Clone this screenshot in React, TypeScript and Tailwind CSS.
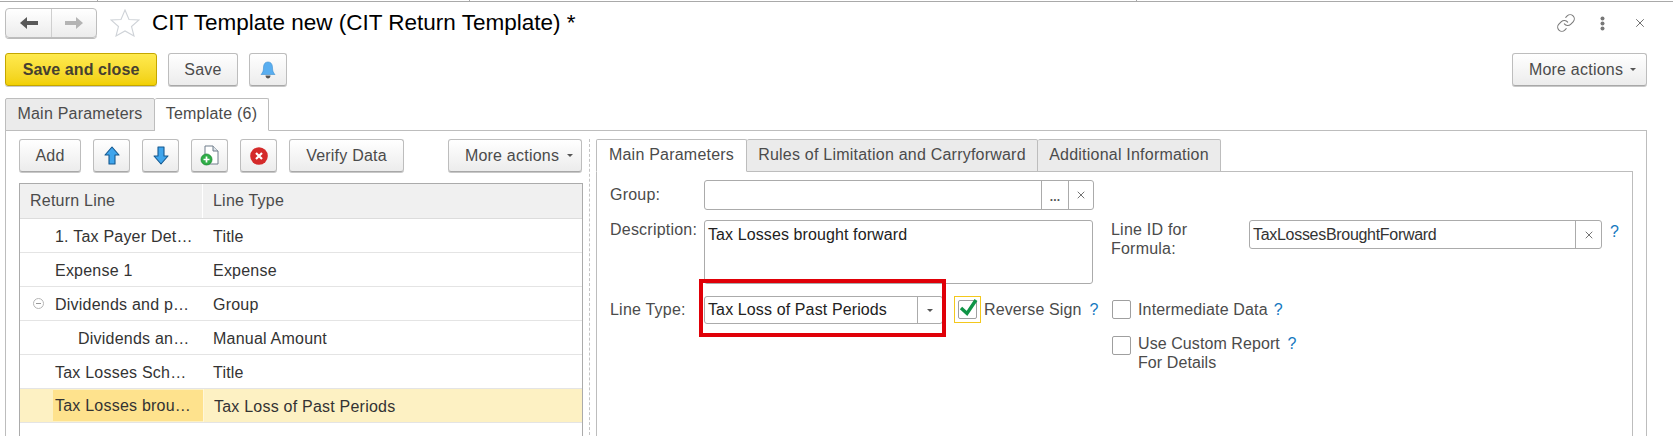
import React from "react";
import { Link, X } from "lucide-react";

const font = "font-['Liberation_Sans',Arial,sans-serif]";
const btn = "flex items-center justify-center h-[33px] rounded-[3px] border border-[#bdbdbd] border-b-[#a8a8a8] bg-gradient-to-b from-white to-[#ececec] shadow-[0_1px_0_#c8c8c8] text-[#4b4b4b] shrink-0";

function Caret() {
  return <span className="inline-block w-0 h-0 border-l-[3px] border-r-[3px] border-t-[3px] border-l-transparent border-r-transparent border-t-[#555]" />;
}

function ArrowV({ down }: { down?: boolean }) {
  return (
    <svg width="16" height="19" viewBox="0 0 16 19" style={{ transform: down ? "scaleY(-1)" : undefined }}>
      <path d="M8 1 L15 9 H11 V18 H5 V9 H1 Z" fill="#3fa5ec" stroke="#14588f" strokeWidth="1.1" strokeLinejoin="round" />
    </svg>
  );
}

function Q({ className = "" }: { className?: string }) {
  return <span className={`text-[#1478c0] text-[16px] font-normal ${className}`}>?</span>;
}

function Check({ className = "" }: { className?: string }) {
  return <span className={`block w-[19px] h-[19px] rounded-[2px] border border-[#9f9f9f] bg-white shrink-0 ${className}`} />;
}

const rows = [
  { pad: "pl-[35px]", name: "1. Tax Payer Det…", type: "Title" },
  { pad: "pl-[35px]", name: "Expense 1", type: "Expense" },
  { pad: "pl-[35px]", name: "Dividends and p…", type: "Group", tree: true },
  { pad: "pl-[58px]", name: "Dividends an…", type: "Manual Amount" },
  { pad: "pl-[35px]", name: "Tax Losses Sch…", type: "Title" },
  { pad: "pl-[35px]", name: "Tax Losses brou…", type: "Tax Loss of Past Periods", sel: true },
];

function TableBody() {
  return (
    <div>
      {rows.map((r) => (
        <div key={r.name} className={`flex h-[34px] border-b border-[#e4e4e4] text-[#333] ${r.sel ? "bg-[#fdf1c3]" : ""}`}>
          {r.sel ? (
            <div className="w-[183px] flex shrink-0">
              <div className="w-[33px]" />
              <div className="w-[150px] bg-[#fee28d] mt-px mb-px pl-[2px] pt-[1px] flex items-center whitespace-nowrap">{r.name}</div>
            </div>
          ) : (
            <div className={`relative w-[183px] shrink-0 flex items-center ${r.pad} pt-[2px] whitespace-nowrap`}>
              {r.tree && (
                <span className="absolute left-[13px] top-[11px] w-[11px] h-[11px] rounded-full border border-[#b5b5b5] flex items-center justify-center">
                  <span className="block w-[5px] h-px bg-[#999]" />
                </span>
              )}
              {r.name}
            </div>
          )}
          <div className={`flex items-center pl-[10px] pt-[2px] ${r.sel ? "border-l border-[#fff6d8]" : ""}`}>{r.type}</div>
        </div>
      ))}
    </div>
  );
}

export default function App() {
  return (
    <div className={`relative w-[1673px] h-[436px] overflow-hidden bg-white ${font} text-[16px] tracking-[0.22px] text-[#4b4b4b]`}>
      {/* top strip */}
      <div className="h-[2px] border-b border-[#a9a9a9] flex">
        <span className="ml-[97px] w-px h-px bg-[#a9a9a9]" />
        <span className="ml-[371px] w-px h-px bg-[#a9a9a9]" />
        <span className="ml-[666px] w-px h-px bg-[#a9a9a9]" />
      </div>

      {/* title row */}
      <div className="flex items-center h-[51px] pl-[5px] pb-[10px] pt-[1px]">
        <div className="flex h-[30px] w-[92px] rounded-[4px] border border-[#bdbdbd] bg-gradient-to-b from-white to-[#ececec] shadow-[0_1px_0_#bbb]">
          <div className="w-[46px] flex items-center justify-center border-r border-[#cfcfcf]">
            <svg width="18" height="12" viewBox="0 0 18 12"><path d="M0 6 L7 0 V4 H18 V8 H7 V12 Z" fill="#595959" /></svg>
          </div>
          <div className="flex-1 flex items-center justify-center">
            <svg width="18" height="12" viewBox="0 0 18 12"><path d="M18 6 L11 0 V4 H0 V8 H11 V12 Z" fill="#b4b4b4" /></svg>
          </div>
        </div>
        <svg className="ml-[13px]" width="30" height="28" viewBox="0 0 30 28">
          <path d="M15 1 L19 10.5 L29 11 L21.5 17.5 L24 27 L15 22 L6 27 L8.5 17.5 L1 11 L11 10.5 Z" fill="#fff" stroke="#cfd3d8" strokeWidth="1.1" />
        </svg>
        <div className="ml-[12px] text-[22.5px] tracking-normal text-black leading-none whitespace-nowrap">CIT Template new (CIT Return Template) *</div>
        <div className="ml-auto flex items-center pr-[26px]">
          <Link size={20} strokeWidth={1.3} className="text-[#7a7a7a]" />
          <svg className="ml-[24px]" width="5" height="15" viewBox="0 0 5 15">
            <circle cx="2.5" cy="2.5" r="2" fill="#777" /><circle cx="2.5" cy="7.5" r="2" fill="#777" /><circle cx="2.5" cy="12.5" r="2" fill="#777" />
          </svg>
          <X size={14} strokeWidth={1.6} className="ml-[28px] text-[#666]" />
        </div>
      </div>

      {/* command bar */}
      <div className="flex pl-[5px] pr-[26px] gap-[11px]">
        <button className="flex items-center justify-center h-[33px] w-[152px] rounded-[3px] border border-[#c4a600] bg-gradient-to-b from-[#ffea4d] to-[#f1d000] shadow-[0_1px_0_#c9c9c9] font-bold text-[#454030] tracking-[0.08px]">Save and close</button>
        <button className={`${btn} w-[70px]`}>Save</button>
        <button className={`${btn} w-[38px]`}>
          <svg width="16" height="18" viewBox="0 0 16 18">
            <path d="M8 1 C4.5 1 3.5 4 3.5 7 C3.5 10 2.5 12 1 13.5 H15 C13.5 12 12.5 10 12.5 7 C12.5 4 11.5 1 8 1 Z" fill="#59aef0" stroke="#3d8fd0" strokeWidth="0.6" />
            <path d="M5.5 14.5 H10.5 C10.5 16.5 9.2 17.5 8 17.5 C6.8 17.5 5.5 16.5 5.5 14.5 Z" fill="#555" />
          </svg>
        </button>
        <button className={`${btn} w-[135px] ml-auto gap-[7px] pl-[6px]`}>More actions <Caret /></button>
      </div>

      {/* form tabs */}
      <div className="flex pl-[5px] mt-[12px] h-[33px] -mb-px relative z-10">
        <div className="w-[150px] h-[33px] flex items-center justify-center border border-[#bdbdbd] bg-[#ebebeb] rounded-t-[2px] pb-[1px]">Main Parameters</div>
        <div className="w-[114px] h-[33px] flex items-center justify-center border border-l-0 border-b-white border-[#bdbdbd] bg-white rounded-t-[2px] pb-[1px]">Template (6)</div>
      </div>

      {/* main panel */}
      <div className="ml-[5px] w-[1642px] h-[310px] border border-[#bdbdbd] border-b-0 flex pt-[8px] pl-[13px]">
        {/* left */}
        <div className="w-[564px] shrink-0">
          <div className="flex gap-[12px]">
            <button className={`${btn} w-[62px]`}>Add</button>
            <button className={`${btn} w-[37px]`}><ArrowV /></button>
            <button className={`${btn} w-[37px]`}><ArrowV down /></button>
            <button className={`${btn} w-[37px]`}>
              <svg width="19" height="21" viewBox="0 0 19 21">
                <path d="M5 1 H13 L18 6 V19 H5 Z" fill="#fff" stroke="#6e7c8a" strokeWidth="1" />
                <path d="M13 1 V6 H18" fill="#dfe5ea" stroke="#6e7c8a" strokeWidth="1" />
                <circle cx="6.5" cy="14.5" r="5.5" fill="#2fae47" stroke="#1c8a33" strokeWidth="0.8" />
                <path d="M6.5 11.5 V17.5 M3.5 14.5 H9.5" stroke="#fff" strokeWidth="1.7" />
              </svg>
            </button>
            <button className={`${btn} w-[37px]`}>
              <svg width="18" height="18" viewBox="0 0 18 18">
                <circle cx="9" cy="9" r="8.8" fill="#d42a2a" />
                <path d="M6 6 L12 12 M12 6 L6 12" stroke="#fff" strokeWidth="2.2" />
              </svg>
            </button>
            <button className={`${btn} w-[115px]`}>Verify Data</button>
            <button className={`${btn} w-[134px] ml-[32px] gap-[8px] pl-[8px]`}>More actions <Caret /></button>
          </div>

          <div className="mt-[11px] h-[300px] border border-b-0 border-[#ababab]">
            <div className="flex h-[35px] border-b border-[#dcdcdc] bg-[#f0f0f0] text-[#4b4b4b]">
              <div className="w-[183px] flex items-center pl-[10px] border-r border-white">Return Line</div>
              <div className="flex items-center pl-[10px]">Line Type</div>
            </div>
            <TableBody />
          </div>
        </div>

        {/* splitter */}
        <div className="ml-[6px] mr-[6px] w-px border-l border-dashed border-[#c4c4c4] shrink-0" />

        {/* right */}
        <div className="flex-1 min-w-0">
          <div className="flex h-[33px] -mb-px relative z-10">
            <div className="w-[151px] flex items-center justify-center border border-b-white border-[#bdbdbd] bg-white rounded-t-[2px] pb-[1px]">Main Parameters</div>
            <div className="w-[291px] flex items-center justify-center border border-l-0 border-[#bdbdbd] bg-[#ebebeb] rounded-t-[2px] pb-[1px]">Rules of Limitation and Carryforward</div>
            <div className="w-[183px] flex items-center justify-center border border-l-0 border-[#bdbdbd] bg-[#ebebeb] rounded-t-[2px] pb-[1px]">Additional Information</div>
          </div>
          <div className="h-[270px] mr-[13px] border border-[#bdbdbd] border-b-0 pl-[13px] pt-[8px]">
            {/* group */}
            <div className="flex h-[30px]">
              <div className="w-[94px] flex items-center">Group:</div>
              <div className="w-[390px] flex border border-[#ababab] rounded-[3px] text-[#555]">
                <div className="flex-1" />
                <div className="w-[27px] border-l border-[#ababab] flex items-center justify-center font-bold text-[12px] pt-[3px]">...</div>
                <div className="w-[25px] border-l border-[#ababab] flex items-center justify-center"><X size={12} strokeWidth={1.5} className="text-[#444]" /></div>
              </div>
            </div>
            <div className="flex mt-[10px]">
              <div className="w-[94px] leading-[18px] pt-[1px]">Description:</div>
              <div className="w-[389px] h-[64px] border border-[#ababab] rounded-[3px] pl-[3px] pt-[2px] text-[#222] tracking-[0.1px]">Tax Losses brought forward</div>
              <div className="w-[138px] ml-[18px] leading-[19px]">Line ID for<br />Formula:</div>
              <div className="w-[353px] h-[29px] flex border border-[#ababab] rounded-[3px] text-[#333]">
                <div className="flex-1 flex items-center pl-[3px] tracking-[-0.3px]">TaxLossesBroughtForward</div>
                <div className="w-[26px] border-l border-[#ababab] flex items-center justify-center"><X size={12} strokeWidth={1.5} className="text-[#444]" /></div>
              </div>
              <Q className="ml-[8px] leading-[24px]" />
            </div>
            <div className="flex mt-[12px]">
              <div className="w-[94px] flex items-center h-[28px]">Line Type:</div>
              <div className="w-[239px] h-[28px] flex border border-[#ababab] rounded-[3px] text-[#222] relative">
                <div className="flex-1 flex items-center pl-[3px] tracking-[0.12px]">Tax Loss of Past Periods</div>
                <div className="w-[25px] border-l border-[#ababab] flex items-center justify-center"><Caret /></div>
                <div className="absolute -left-[6px] -top-[18px] w-[247px] h-[58px] border-[4px] border-[#e00008] pointer-events-none" />
              </div>
              <div className="ml-[11px] w-[27px] h-[27px] border border-[#f3c81d] flex items-center justify-center relative">
                <Check />
                <svg className="absolute left-0 top-0" width="25" height="25" viewBox="0 0 25 25">
                  <path d="M6 11 L12 16.5 L21 3" fill="none" stroke="#0f9446" strokeWidth="3.4" />
                </svg>
              </div>
              <div className="ml-[3px] w-[127px] h-[27px] flex items-center gap-[8px] whitespace-nowrap tracking-[0.12px]">Reverse Sign <Q /></div>
              <div>
                <div className="flex items-center h-[27px] pl-[1px]">
                  <Check />
                  <span className="ml-[7px] tracking-[0.15px]">Intermediate Data</span>
                  <Q className="ml-[6px]" />
                </div>
                <div className="flex pl-[1px] mt-[13px]">
                  <Check />
                  <div className="ml-[7px] leading-[19px] -mt-[2px] tracking-[0.08px]">Use Custom Report <Q className="ml-[3px]" /><br />For Details</div>
                </div>
              </div>
            </div>
          </div>
        </div>
      </div>
    </div>
  );
}
